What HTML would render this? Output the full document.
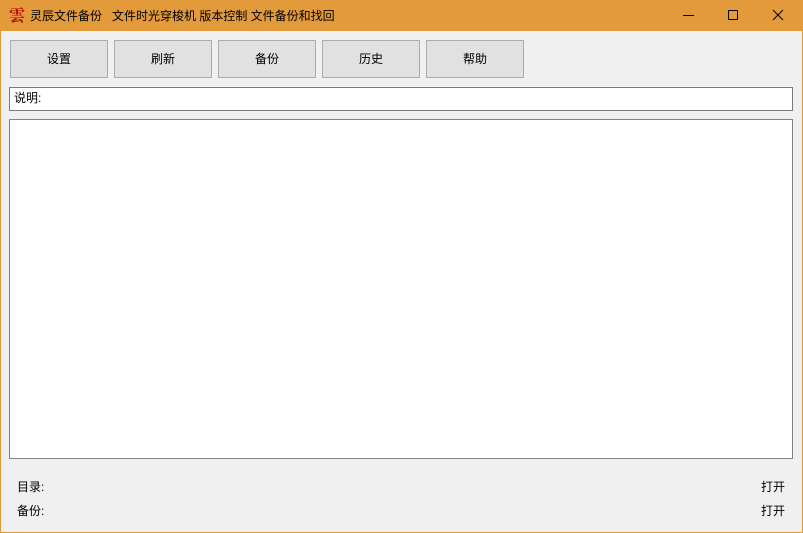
<!DOCTYPE html><html><head><meta charset="utf-8"><style>
*{margin:0;padding:0;box-sizing:border-box}
body{width:803px;height:533px;background:#e39a3b;font-family:"Liberation Sans","Noto Sans CJK SC",sans-serif;font-size:12px;color:#000;position:relative;overflow:hidden}
.win{position:absolute;left:1px;top:31px;width:801px;height:501px;background:#f0f0f0}
.t{position:absolute;top:7px;left:30px;font-size:12px}
.btn{position:absolute;top:40px;width:98px;height:38px;background:#e1e1e1;border:1px solid #adadad;text-align:center;line-height:37px;font-size:12px}
.box{position:absolute;background:#fff}
.l{position:absolute;font-size:12px}
</style></head><body>
<div style="position:absolute;left:9px;top:6px;color:#b8100a;font-family:'Noto Serif CJK SC',serif;font-size:16px;line-height:18px;font-weight:900">雲</div>
<div class="t">灵辰文件备份&nbsp;&nbsp;&nbsp;文件时光穿梭机 版本控制 文件备份和找回</div>
<div style="position:absolute;left:683px;top:15px;width:11px;height:1px;background:#000"></div>
<div style="position:absolute;left:728px;top:10px;width:10px;height:10px;border:1px solid #000"></div>
<svg style="position:absolute;left:772px;top:9px" width="12" height="12"><path d="M1 1L11 11M11 1L1 11" stroke="#000" stroke-width="1"/></svg>
<div class="win"></div>
<div class="btn" style="left:10px">设置</div>
<div class="btn" style="left:114px">刷新</div>
<div class="btn" style="left:218px">备份</div>
<div class="btn" style="left:322px">历史</div>
<div class="btn" style="left:426px">帮助</div>
<div class="box" style="left:9px;top:87px;width:784px;height:24px;border:1px solid #7a7a7a;padding:2px 4px;line-height:16px">说明:</div>
<div class="box" style="left:9px;top:119px;width:784px;height:340px;border:1px solid #828282"></div>
<div class="l" style="left:17px;top:478px">目录:</div>
<div class="l" style="left:761px;top:478px">打开</div>
<div class="l" style="left:17px;top:502px">备份:</div>
<div class="l" style="left:761px;top:502px">打开</div>
</body></html>
